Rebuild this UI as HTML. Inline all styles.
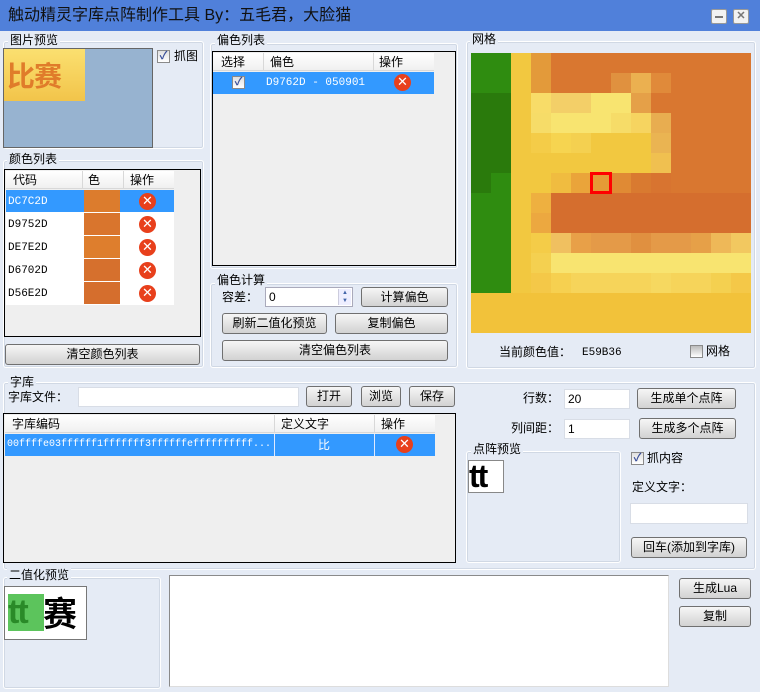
<!DOCTYPE html>
<html><head><meta charset="utf-8"><style>
*{box-sizing:border-box;margin:0;padding:0}
body{width:760px;height:692px;background:#e5ebf5;font-family:"Liberation Sans","Noto Sans CJK SC",sans-serif;font-size:12px;color:#000;position:relative;overflow:hidden}
.a{position:absolute}
.t{position:absolute;white-space:nowrap;line-height:14px}
.fr{position:absolute;border:1px solid #fff;box-shadow:inset 0 0 0 1px #d0d8e4;border-radius:3px}
.lb{position:absolute;background:#e5ebf5;padding:0 2px;line-height:14px;white-space:nowrap}
.btn{position:absolute;border:1px solid #707070;border-radius:3px;background:linear-gradient(#f6f6f6,#e4e4e4 50%,#d2d2d2);text-align:center;line-height:18px;white-space:nowrap}
.inp{position:absolute;background:#fff;border:1px solid #d8dde6;line-height:18px;padding-left:3px}
.tb{position:absolute;background:#efefef;border:1px solid #000}
.hd{position:absolute;background:linear-gradient(#fff,#f0f0f0);border-bottom:1px solid #d8d8d8;height:18px}
.hd span{position:absolute;top:1px;line-height:16px}
.hd b{position:absolute;top:0;width:1px;height:18px;background:#d8d8d8}
.sel{position:absolute;background:#3399ff;color:#fff}
.x{position:absolute;width:17px;height:17px;border-radius:50%;background:#e8401c;color:#fff;font-weight:bold;font-size:13px;line-height:17px;text-align:center;font-family:"DejaVu Sans",sans-serif}
.cb{position:absolute;width:13px;height:13px;border:1px solid #8a8a8a;background:linear-gradient(#e0e0e0,#fff);font-size:11px;line-height:11px;text-align:center;color:#3a4f9a;font-weight:bold}
.mono{font-family:"Liberation Mono",monospace;font-size:11px}
#g{position:absolute;left:471px;top:53px;width:280px;height:280px;display:grid;grid-template-columns:repeat(14,20px);grid-auto-rows:20px}
</style></head><body>
<div class="a" style="left:0;top:0;width:760px;height:31px;background:#5080da"></div>
<div class="t" style="left:8px;top:7px;font-size:16px;line-height:18px;color:#111">触动精灵字库点阵制作工具 By：五毛君，大脸猫</div>
<div class="a" style="left:711px;top:9px;width:16px;height:15px;background:#f2f2f2;border:1px solid #999;border-radius:2px"><div class="a" style="left:3px;top:6px;width:8px;height:2px;background:#777"></div></div>
<div class="a" style="left:733px;top:9px;width:16px;height:15px;background:#f2f2f2;border:1px solid #999;border-radius:2px;color:#777;font-size:11px;line-height:13px;text-align:center;font-weight:bold">✕</div>

<div class="fr" style="left:3px;top:41px;width:201px;height:108px"></div>
<div class="lb" style="left:8px;top:33px">图片预览</div>
<div class="a" style="left:3px;top:48px;width:150px;height:100px;background:#97b3d0;border:1px solid #666"></div>
<div class="a" style="left:4px;top:49px;width:81px;height:52px;background:linear-gradient(#fbe070,#f2c44a);color:#e07c2a;font-size:28px;font-weight:bold;line-height:52px;padding-left:3px;font-family:'Noto Sans CJK SC',sans-serif;letter-spacing:-1px;overflow:hidden">比赛</div>
<div class="cb" style="left:157px;top:50px">✓</div>
<div class="t" style="left:174px;top:49px">抓图</div>

<div class="fr" style="left:3px;top:160px;width:201px;height:208px"></div>
<div class="lb" style="left:7px;top:152px">颜色列表</div>
<div class="tb" style="left:4px;top:169px;width:197px;height:168px"></div>
<div class="hd" style="left:6px;top:171px;width:168px"><span style="left:7px">代码</span><b style="left:76px"></b><span style="left:82px">色</span><b style="left:117px"></b><span style="left:124px">操作</span></div>
<div class="a" style="left:6px;top:190px;width:168px;height:115px;background:#fff"></div>
<div class="sel" style="left:6px;top:190px;width:168px;height:22px"></div>
<div class="t mono" style="left:8px;top:195px;color:#fff">DC7C2D</div>
<div class="t mono" style="left:8px;top:218px">D9752D</div>
<div class="t mono" style="left:8px;top:241px">DE7E2D</div>
<div class="t mono" style="left:8px;top:264px">D6702D</div>
<div class="t mono" style="left:8px;top:287px">D56E2D</div>
<div class="a" style="left:84px;top:190px;width:36px;height:22px;background:#dc7c2d"></div>
<div class="a" style="left:84px;top:213px;width:36px;height:22px;background:#d9752d"></div>
<div class="a" style="left:84px;top:236px;width:36px;height:22px;background:#de7e2d"></div>
<div class="a" style="left:84px;top:259px;width:36px;height:22px;background:#d6702d"></div>
<div class="a" style="left:84px;top:282px;width:36px;height:22px;background:#d56e2d"></div>
<div class="x" style="left:139px;top:193px">✕</div>
<div class="x" style="left:139px;top:216px">✕</div>
<div class="x" style="left:139px;top:239px">✕</div>
<div class="x" style="left:139px;top:262px">✕</div>
<div class="x" style="left:139px;top:285px">✕</div>
<div class="btn" style="left:5px;top:344px;width:195px;height:21px">清空颜色列表</div>

<div class="fr" style="left:210px;top:43px;width:248px;height:226px"></div>
<div class="lb" style="left:215px;top:33px">偏色列表</div>
<div class="tb" style="left:212px;top:51px;width:244px;height:215px"></div>
<div class="hd" style="left:213px;top:53px;width:221px"><span style="left:8px">选择</span><b style="left:50px"></b><span style="left:57px">偏色</span><b style="left:160px"></b><span style="left:166px">操作</span></div>
<div class="sel" style="left:213px;top:72px;width:221px;height:22px"></div>
<div class="cb" style="left:232px;top:76px">✓</div>
<div class="t mono" style="left:266px;top:76px;color:#fff">D9762D - 050901</div>
<div class="x" style="left:394px;top:74px">✕</div>

<div class="fr" style="left:210px;top:283px;width:248px;height:85px"></div>
<div class="lb" style="left:215px;top:273px">偏色计算</div>
<div class="t" style="left:222px;top:290px">容差：</div>
<div class="inp" style="left:265px;top:287px;width:88px;height:20px;border-color:#aab">0</div>
<div class="a" style="left:338px;top:289px;width:13px;height:16px;background:#eef;border-left:1px solid #ccd;font-size:6px;line-height:8px;color:#46a;text-align:center">▲<br>▼</div>
<div class="btn" style="left:361px;top:287px;width:87px;height:20px">计算偏色</div>
<div class="btn" style="left:222px;top:313px;width:105px;height:21px">刷新二值化预览</div>
<div class="btn" style="left:335px;top:313px;width:113px;height:21px">复制偏色</div>
<div class="btn" style="left:222px;top:340px;width:226px;height:21px">清空偏色列表</div>

<div class="fr" style="left:466px;top:41px;width:290px;height:328px"></div>
<div class="lb" style="left:470px;top:32px">网格</div>
<div id="g">
<i style="background:#2f8c10"></i><i style="background:#2f8c10"></i><i style="background:#f2c840"></i><i style="background:#e39a3a"></i><i style="background:#d97730"></i><i style="background:#d97730"></i><i style="background:#d97730"></i><i style="background:#d97730"></i><i style="background:#d97730"></i><i style="background:#d97730"></i><i style="background:#d97730"></i><i style="background:#d97730"></i><i style="background:#d97730"></i><i style="background:#d97730"></i>
<i style="background:#2f8c10"></i><i style="background:#2f8c10"></i><i style="background:#f2c840"></i><i style="background:#e39a3a"></i><i style="background:#d97730"></i><i style="background:#d97730"></i><i style="background:#d97730"></i><i style="background:#e0913f"></i><i style="background:#ebb050"></i><i style="background:#e08a3a"></i><i style="background:#d97730"></i><i style="background:#d97730"></i><i style="background:#d97730"></i><i style="background:#d97730"></i>
<i style="background:#2a7a0c"></i><i style="background:#2a7a0c"></i><i style="background:#f2c840"></i><i style="background:#f8dc68"></i><i style="background:#f3cf68"></i><i style="background:#f3cf68"></i><i style="background:#f8e470"></i><i style="background:#f8e470"></i><i style="background:#e5a048"></i><i style="background:#d97730"></i><i style="background:#d97730"></i><i style="background:#d97730"></i><i style="background:#d97730"></i><i style="background:#d97730"></i>
<i style="background:#2a7a0c"></i><i style="background:#2a7a0c"></i><i style="background:#f2c840"></i><i style="background:#f6dc68"></i><i style="background:#f8e470"></i><i style="background:#f8e470"></i><i style="background:#f8e470"></i><i style="background:#f6dc68"></i><i style="background:#f6d460"></i><i style="background:#e8ad50"></i><i style="background:#d97730"></i><i style="background:#d97730"></i><i style="background:#d97730"></i><i style="background:#d97730"></i>
<i style="background:#2a7a0c"></i><i style="background:#2a7a0c"></i><i style="background:#f2c840"></i><i style="background:#f4cc48"></i><i style="background:#f6d450"></i><i style="background:#f4d050"></i><i style="background:#f2c840"></i><i style="background:#f2c840"></i><i style="background:#f2c840"></i><i style="background:#eab452"></i><i style="background:#d97730"></i><i style="background:#d97730"></i><i style="background:#d97730"></i><i style="background:#d97730"></i>
<i style="background:#2a7a0c"></i><i style="background:#2a7a0c"></i><i style="background:#f2c840"></i><i style="background:#f2c840"></i><i style="background:#f2c840"></i><i style="background:#f2c840"></i><i style="background:#f2c840"></i><i style="background:#f2c840"></i><i style="background:#f2c840"></i><i style="background:#f0c050"></i><i style="background:#d97730"></i><i style="background:#d97730"></i><i style="background:#d97730"></i><i style="background:#d97730"></i>
<i style="background:#2a7a0c"></i><i style="background:#2f8c10"></i><i style="background:#f2c840"></i><i style="background:#f2c840"></i><i style="background:#f0bc40"></i><i style="background:#eaa43a"></i><i style="background:#e59b36"></i><i style="background:#e08a34"></i><i style="background:#d97a30"></i><i style="background:#d87430"></i><i style="background:#d97730"></i><i style="background:#d97730"></i><i style="background:#d97730"></i><i style="background:#d97730"></i>
<i style="background:#2f8c10"></i><i style="background:#2f8c10"></i><i style="background:#f2c840"></i><i style="background:#eeb040"></i><i style="background:#d56e2e"></i><i style="background:#d56e2e"></i><i style="background:#d56e2e"></i><i style="background:#d56e2e"></i><i style="background:#d56e2e"></i><i style="background:#d56e2e"></i><i style="background:#d56e2e"></i><i style="background:#d56e2e"></i><i style="background:#d56e2e"></i><i style="background:#d56e2e"></i>
<i style="background:#2f8c10"></i><i style="background:#2f8c10"></i><i style="background:#f2c840"></i><i style="background:#eca840"></i><i style="background:#d56e2e"></i><i style="background:#d56e2e"></i><i style="background:#d56e2e"></i><i style="background:#d56e2e"></i><i style="background:#d56e2e"></i><i style="background:#d56e2e"></i><i style="background:#d56e2e"></i><i style="background:#d56e2e"></i><i style="background:#d56e2e"></i><i style="background:#d56e2e"></i>
<i style="background:#2f8c10"></i><i style="background:#2f8c10"></i><i style="background:#f2c840"></i><i style="background:#f4cc48"></i><i style="background:#f0c060"></i><i style="background:#e8a048"></i><i style="background:#e49a48"></i><i style="background:#e49a48"></i><i style="background:#e09040"></i><i style="background:#e49a48"></i><i style="background:#e49a48"></i><i style="background:#e6a048"></i><i style="background:#eeb858"></i><i style="background:#f2c860"></i>
<i style="background:#2f8c10"></i><i style="background:#2f8c10"></i><i style="background:#f2c840"></i><i style="background:#f4d050"></i><i style="background:#f8e470"></i><i style="background:#f8e470"></i><i style="background:#f8e470"></i><i style="background:#f8e470"></i><i style="background:#f8e470"></i><i style="background:#f8e470"></i><i style="background:#f8e470"></i><i style="background:#f8e470"></i><i style="background:#f8e470"></i><i style="background:#f8e470"></i>
<i style="background:#2f8c10"></i><i style="background:#2f8c10"></i><i style="background:#f2c840"></i><i style="background:#f4c848"></i><i style="background:#f6d050"></i><i style="background:#f6d45a"></i><i style="background:#f6d45a"></i><i style="background:#f6d45a"></i><i style="background:#f6d45a"></i><i style="background:#f6d860"></i><i style="background:#f6d45a"></i><i style="background:#f6d45a"></i><i style="background:#f4d050"></i><i style="background:#f4c848"></i>
<i style="grid-column:span 14;grid-row:span 2;background:#f2c23a"></i>
</div>
<div class="a" style="left:590px;top:172px;width:22px;height:22px;border:3px solid #f00"></div>
<div class="t" style="left:499px;top:345px">当前颜色值：</div>
<div class="t mono" style="left:582px;top:346px">E59B36</div>
<div class="cb" style="left:690px;top:345px;background:linear-gradient(#bbb,#fff)"></div>
<div class="t" style="left:706px;top:344px">网格</div>

<div class="fr" style="left:3px;top:382px;width:753px;height:188px"></div>
<div class="lb" style="left:8px;top:375px">字库</div>
<div class="t" style="left:8px;top:390px">字库文件：</div>
<div class="inp" style="left:78px;top:387px;width:221px;height:20px"></div>
<div class="btn" style="left:306px;top:386px;width:46px;height:21px">打开</div>
<div class="btn" style="left:361px;top:386px;width:40px;height:21px">浏览</div>
<div class="btn" style="left:409px;top:386px;width:46px;height:21px">保存</div>
<div class="tb" style="left:3px;top:413px;width:453px;height:150px"></div>
<div class="hd" style="left:5px;top:415px;width:430px"><span style="left:7px">字库编码</span><b style="left:269px"></b><span style="left:276px">定义文字</span><b style="left:369px"></b><span style="left:376px">操作</span></div>
<div class="sel" style="left:5px;top:434px;width:430px;height:22px"></div>
<div class="a" style="left:274px;top:434px;width:1px;height:22px;background:#e0eaff"></div>
<div class="a" style="left:374px;top:434px;width:1px;height:22px;background:#e0eaff"></div>
<div class="t mono" style="left:7px;top:438px;width:265px;overflow:hidden;color:#fff;font-size:10px;letter-spacing:0">00ffffe03ffffff1fffffff3ffffffeffffffffff...</div>
<div class="t" style="left:318px;top:438px;color:#fff">比</div>
<div class="x" style="left:396px;top:436px">✕</div>
<div class="t" style="left:523px;top:391px">行数：</div>
<div class="inp" style="left:564px;top:389px;width:66px;height:20px">20</div>
<div class="btn" style="left:637px;top:388px;width:99px;height:21px">生成单个点阵</div>
<div class="t" style="left:511px;top:421px">列间距：</div>
<div class="inp" style="left:564px;top:419px;width:66px;height:20px">1</div>
<div class="btn" style="left:639px;top:418px;width:97px;height:21px">生成多个点阵</div>
<div class="fr" style="left:466px;top:451px;width:155px;height:112px"></div>
<div class="lb" style="left:471px;top:442px">点阵预览</div>
<div class="a" style="left:468px;top:460px;width:36px;height:33px;background:#fff;border:1px solid #888;font-weight:bold;font-size:32px;line-height:30px;font-family:'Liberation Sans',sans-serif;letter-spacing:-2px;overflow:hidden">tt</div>
<div class="cb" style="left:631px;top:452px">✓</div>
<div class="t" style="left:647px;top:451px">抓内容</div>
<div class="t" style="left:632px;top:480px">定义文字：</div>
<div class="inp" style="left:630px;top:503px;width:118px;height:21px"></div>
<div class="btn" style="left:631px;top:537px;width:116px;height:21px">回车(添加到字库)</div>

<div class="fr" style="left:3px;top:577px;width:158px;height:112px"></div>
<div class="lb" style="left:7px;top:568px">二值化预览</div>
<div class="a" style="left:4px;top:586px;width:83px;height:54px;background:#fff;border:1px solid #777"></div>
<div class="a" style="left:8px;top:594px;width:36px;height:37px;background:#5cc45c;color:#2a8a28;font-weight:bold;font-size:34px;line-height:36px;font-family:'Liberation Sans',sans-serif;letter-spacing:-2px">tt</div>
<div class="t" style="left:43px;top:593px;font-size:34px;line-height:38px;font-weight:bold;font-family:'Noto Sans CJK SC',sans-serif">赛</div>
<div class="a" style="left:169px;top:575px;width:500px;height:112px;background:#fff;border:1px solid #8a8a8a;border-right-color:#ddd;border-bottom-color:#ddd"></div>
<div class="btn" style="left:679px;top:578px;width:72px;height:21px">生成Lua</div>
<div class="btn" style="left:679px;top:606px;width:72px;height:21px">复制</div>
</body></html>
